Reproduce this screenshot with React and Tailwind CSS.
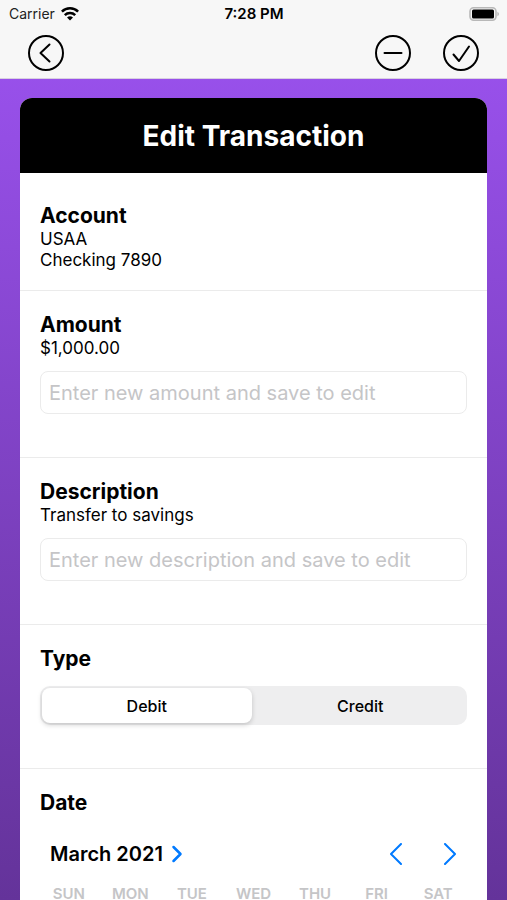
import React, { useState } from "react";

const weekDays = ["SUN", "MON", "TUE", "WED", "THU", "FRI", "SAT"];

const StatusBar = () => {
  return (
    <div className="grid h-7 grid-cols-3 items-center pr-2 pl-[9px] text-sm">
      <div className="flex items-center gap-1.5 text-[#222222]">
        <span>Carrier</span>
        <svg width="18" height="14" viewBox="0 0 18 14" fill="none" aria-hidden="true">
          <g stroke="black" strokeWidth="2.5">
            <path d="M0.9 4.7A11.5 11.5 0 0 1 17.1 4.7" />
            <path d="M3.8 8.2A7.4 7.4 0 0 1 14.2 8.2" />
          </g>
          <path d="M9 13.6L6 10.6A4.5 4.5 0 0 1 12 10.6Z" fill="black" />
        </svg>
      </div>
      <span className="text-center text-[15px] font-semibold">7:28 PM</span>
      <svg className="justify-self-end" width="30" height="14" viewBox="0 0 30 14" aria-hidden="true">
        <rect x="1" y="0.8" width="26" height="12.4" rx="3.6" fill="#f7f7f7" stroke="#b8b8b8" strokeWidth="1.6" />
        <rect x="3" y="2.5" width="22" height="9" rx="1.5" fill="black" />
        <path d="M28.4 4.8Q30 5.5 30 7T28.4 9.2Z" fill="#b8b8b8" />
      </svg>
    </div>
  );
};

const RoundButton = ({ label, path }) => {
  return (
    <button type="button" aria-label={label} className="size-9">
      <svg
        viewBox="0 0 36 36"
        fill="none"
        stroke="black"
        strokeWidth="2"
        strokeLinecap="round"
        strokeLinejoin="round"
      >
        <circle cx="18" cy="18" r="17" />
        <path d={path} />
      </svg>
    </button>
  );
};

const Chevron = ({ path, className }) => {
  return (
    <svg
      className={className}
      viewBox="0 0 12 22"
      fill="none"
      stroke="#007aff"
      strokeLinecap="round"
      strokeLinejoin="round"
      aria-hidden="true"
    >
      <path d={path} />
    </svg>
  );
};

const Section = ({ title, children }) => {
  return (
    <section className="border-b border-[#ebebeb] px-5 pt-5 pb-[43px]">
      <h2 className="text-[21px] leading-[27px] font-bold">{title}</h2>
      {children}
    </section>
  );
};

const EditField = ({ title, value, placeholder }) => {
  const [text, setText] = useState("");
  return (
    <Section title={title}>
      <p className="text-[17px] leading-[21px]">{value}</p>
      <input
        type="text"
        aria-label={title}
        placeholder={placeholder}
        value={text}
        onChange={(e) => setText(e.target.value)}
        className="mt-3 block h-[43px] w-full rounded-lg border border-[#ebebeb] bg-white px-2 text-xl placeholder:text-[#c5c5c7]"
      />
    </Section>
  );
};

const TypePicker = () => {
  const [type, setType] = useState("Debit");
  return (
    <div
      role="radiogroup"
      aria-label="Type"
      className="mt-3.5 grid h-[39px] grid-cols-2 gap-1 rounded-[10px] bg-[#eeeeef] p-0.5"
    >
      {["Debit", "Credit"].map((option) => {
        return (
          <label
            key={option}
            className={`flex items-center justify-center text-base font-medium ${
              type === option
                ? "rounded-lg bg-white shadow-[0_2px_5px_rgba(0,0,0,0.18)]"
                : ""
            }`}
          >
            <input
              type="radio"
              name="type"
              value={option}
              checked={type === option}
              onChange={() => setType(option)}
              className="sr-only"
            />
            {option}
          </label>
        );
      })}
    </div>
  );
};

const Calendar = () => {
  return (
    <div className="mt-[22px]">
      <div className="flex h-8 items-center justify-between pr-[11px] pl-2.5">
        <button type="button" className="flex items-center gap-2 text-xl font-semibold">
          March 2021
          <Chevron path="M2.5 4L9.5 11L2.5 18" className="h-[22px] w-3 stroke-[2.5]" />
        </button>
        <div className="flex gap-[42px]">
          <button type="button" aria-label="Previous month">
            <Chevron path="M11 1L1 11L11 21" className="h-[22px] w-3 stroke-2" />
          </button>
          <button type="button" aria-label="Next month">
            <Chevron path="M1 1L11 11L1 21" className="h-[22px] w-3 stroke-2" />
          </button>
        </div>
      </div>
      <div className="-mx-0.5 mt-3.5 grid grid-cols-7 text-center text-[15px] leading-5 font-semibold text-[#c5c5c7]">
        {weekDays.map((day) => (
          <span key={day}>{day}</span>
        ))}
      </div>
    </div>
  );
};

const App = () => {
  return (
    <div className="flex h-screen flex-col overflow-hidden bg-linear-to-b from-[#9d53f2] to-[#64339a] font-['Inter','Liberation_Sans',sans-serif] text-black">
      <header className="shrink-0 border-b border-[#d8d0e0] bg-[#f7f7f7]">
        <StatusBar />
        <nav className="flex h-[50px] items-center px-7">
          <RoundButton label="Back" path="M21.5 9.5L12.5 18L21.5 26.5" />
          <div className="ml-auto flex gap-8">
            <RoundButton label="Delete" path="M9.5 18H26.5" />
            <RoundButton label="Save" path="M10.5 19.5L16 26L26 11.5" />
          </div>
        </nav>
      </header>
      <main className="min-h-0 flex-1 px-5 pt-[19px]">
        <div className="overflow-hidden rounded-t-xl bg-white">
          <h1 className="bg-black pt-5 pb-[19px] text-center text-[28px] leading-9 font-bold text-white">
            Edit Transaction
          </h1>
          <section className="border-b border-[#ebebeb] px-5 pt-[29px] pb-[19px]">
            <h2 className="text-[21px] leading-[27px] font-bold">Account</h2>
            <p className="text-[17px] leading-[21px]">USAA</p>
            <p className="text-[17px] leading-[21px]">Checking 7890</p>
          </section>
          <EditField
            title="Amount"
            value="$1,000.00"
            placeholder="Enter new amount and save to edit"
          />
          <EditField
            title="Description"
            value="Transfer to savings"
            placeholder="Enter new description and save to edit"
          />
          <Section title="Type">
            <TypePicker />
          </Section>
          <Section title="Date">
            <Calendar />
          </Section>
        </div>
      </main>
    </div>
  );
};
export default App;
